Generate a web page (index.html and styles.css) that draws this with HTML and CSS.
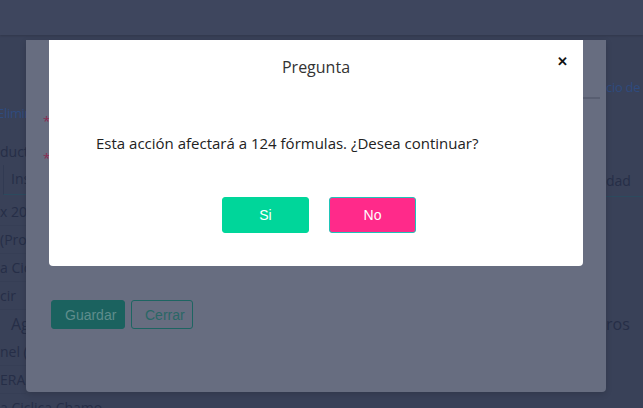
FILE: index.html
```html
<!DOCTYPE html>
<html lang="es">

<head>
    <meta charset="UTF-8">
    <meta name="viewport" content="width=device-width, initial-scale=1.0">
    <title>Pregunta</title>
    <link rel="stylesheet" href="styles.css">
</head>

<body>
    <div class="topbar"></div>

    <div class="page">
        <div class="col-left">
            <div class="row link">Elimin</div>
            <div class="row gap">ductiv</div>
            <div class="row head">Ins</div>
            <div class="row line">x 20</div>
            <div class="row line">(Pro</div>
            <div class="row line">a Cic</div>
            <div class="row line">cir</div>
            <div class="row big">Ag</div>
            <div class="row line">nel (</div>
            <div class="row line">ERAI</div>
            <div class="row">a Ciclica Chamo</div>
        </div>
        <div class="col-right">
            <div class="row link top">cio de f</div>
            <div class="row head">dad</div>
            <div class="row big far">ros</div>
        </div>
    </div>

    <div class="base-modal">
        <span class="star s1">*</span>
        <span class="star s2">*</span>
        <span class="field-line"></span>
        <div class="base-actions">
            <button class="btn-save">Guardar</button>
            <button class="btn-close">Cerrar</button>
        </div>
    </div>

    <div class="dialog">
        <div class="dialog-head">
            <h3>Pregunta</h3>
            <span class="close">&#x2715;</span>
        </div>
        <p class="dialog-text">Esta acción afectará a 124 fórmulas. ¿Desea continuar?</p>
        <div class="dialog-actions">
            <button class="btn-yes">Si</button>
            <button class="btn-no">No</button>
        </div>
    </div>
</body>

</html>
```

FILE: styles.css
```css
* {
    box-sizing: border-box;
}

body {
    margin: 0;
    width: 643px;
    height: 408px;
    overflow: hidden;
    background-color: #394158;
    font-family: "Open Sans", "Noto Sans", sans-serif;
    position: relative;
}

.topbar {
    height: 35px;
    background-color: #3e465e;
    box-shadow: 0 1px 2px rgba(0, 0, 0, 0.15);
}

.page {
    display: flex;
    justify-content: space-between;
}

.col-left {
    width: 26px;
    padding-top: 65px;
    color: #262e47;
    font-size: 14px;
}

.col-right {
    width: 37px;
    padding-top: 40px;
    color: #262e47;
    font-size: 14px;
}

.row {
    height: 28px;
    line-height: 28px;
    white-space: nowrap;
}

.row.link {
    color: #2f4b7e;
    height: 26px;
    line-height: 26px;
    font-size: 13px;
    letter-spacing: -0.3px;
}

.col-left .row.link {
    margin-left: -3px;
}

.row.gap {
    margin-top: 13px;
    height: 26px;
    line-height: 26px;
}

.col-left .row.head {
    height: 30px;
    line-height: 28px;
    margin-left: 3px;
    padding-left: 7px;
    border-left: 1px solid #313a52;
    border-bottom: 1px solid #2c4a5e;
    margin-bottom: 3px;
}

.row.big {
    font-size: 16px;
    padding-left: 11px;
}

.row.line {
    border-bottom: 1px solid #363e55;
}

.col-right .row.top {
    height: 24px;
    line-height: 24px;
}

.col-right .row.head {
    margin-top: 68px;
    height: 30px;
    line-height: 28px;
    padding-left: 0;
    border-bottom: 1px solid #2c4a5e;
}

.col-right .row.far {
    margin-top: 113px;
    padding-left: 0;
}

.base-modal {
    position: absolute;
    left: 26px;
    top: 40px;
    width: 580px;
    height: 352px;
    background-color: #676d80;
    border-radius: 0 0 4px 4px;
    box-shadow: 0 2px 6px rgba(0, 0, 0, 0.15);
    display: flex;
    flex-direction: column;
    justify-content: flex-end;
    padding: 0 0 63px 25px;
}

.star {
    position: absolute;
    left: 17px;
    color: #8c2a52;
    font-size: 13px;
}

.s1 {
    top: 72px;
}

.s2 {
    top: 109px;
}

.field-line {
    position: absolute;
    left: 555px;
    top: 57px;
    width: 19px;
    height: 2px;
    background-color: #585e71;
}

.base-actions {
    display: flex;
    gap: 6px;
}

.base-actions button {
    height: 29px;
    font-family: "Liberation Sans", Arial, sans-serif;
    font-size: 14px;
    border-radius: 3px;
    padding: 0 13px;
}

.btn-save {
    width: 74px;
    background-color: #1b625f;
    border: 1px solid #1b625f;
    color: #5f8d8c;
}

.btn-close {
    width: 62px;
    background: transparent;
    border: 1px solid #1d6562;
    color: #2a6766;
}

.dialog {
    position: absolute;
    left: 49px;
    top: 40px;
    width: 534px;
    height: 226px;
    background-color: #ffffff;
    border-radius: 0 0 4px 4px;
}

.dialog-head {
    position: relative;
    padding-top: 17px;
    text-align: center;
}

.dialog-head h3 {
    margin: 0;
    font-size: 16px;
    font-weight: 400;
    color: #333333;
    line-height: 20px;
}

.close {
    position: absolute;
    right: 15px;
    top: 12px;
    font-size: 13px;
    font-weight: 700;
    color: #111111;
}

.dialog-text {
    margin: 0;
    padding: 0 0 0 47px;
    margin-top: 56px;
    font-size: 15px;
    color: #222222;
    line-height: 20px;
}

.dialog-actions {
    display: flex;
    justify-content: center;
    gap: 20px;
    margin-top: 44px;
    padding-left: 6px;
}

.dialog-actions button {
    width: 87px;
    height: 36px;
    border-radius: 3px;
    font-family: "Liberation Sans", Arial, sans-serif;
    font-size: 14px;
    color: #ffffff;
}

.btn-yes {
    background-color: #00d69a;
    border: 1px solid #00d69a;
}

.btn-no {
    background-color: #ff2a8a;
    border: 1px solid #1fc4b8;
}
```
